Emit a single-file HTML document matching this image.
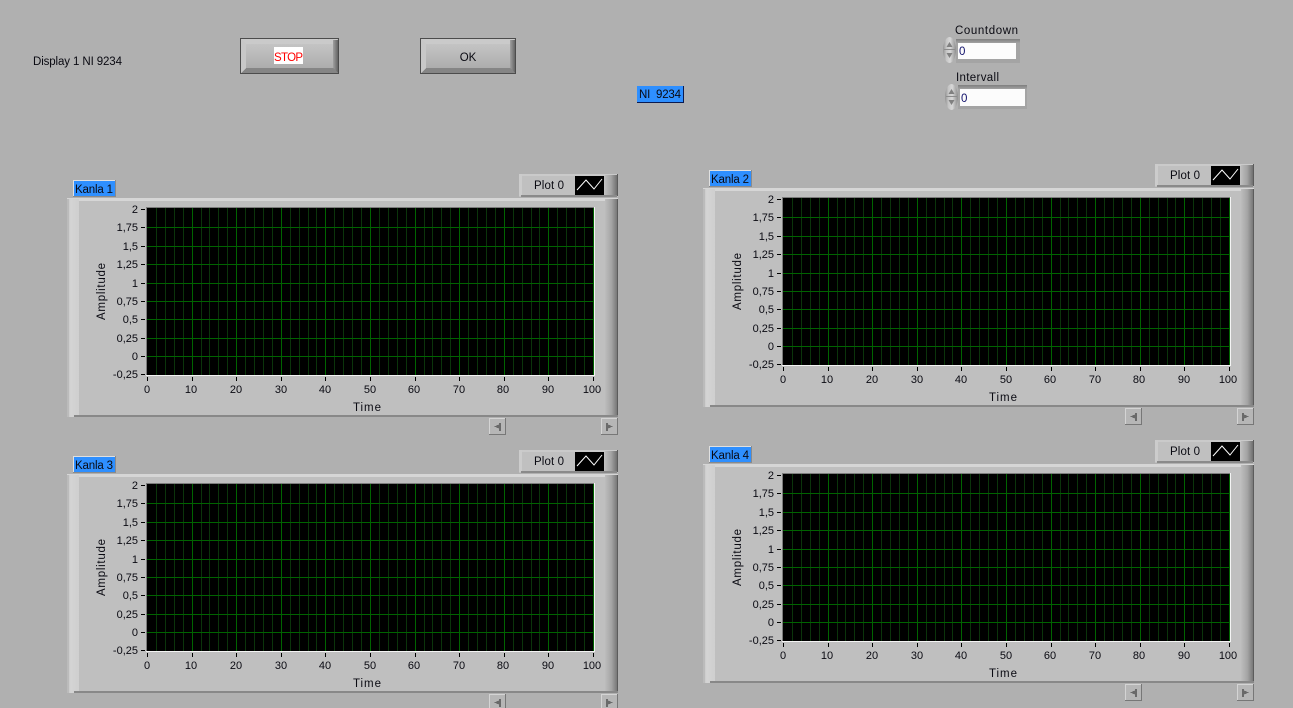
<!DOCTYPE html>
<html><head><meta charset="utf-8"><title>Display 1 NI 9234</title>
<style>
html,body{margin:0;padding:0;background:#b0b0b0;width:1293px;height:708px;overflow:hidden}
svg{display:block;position:absolute;left:0;top:0}
text{font-family:"Liberation Sans",sans-serif;font-size:11px;fill:#0a0a12}
.e{text-anchor:end}.m{text-anchor:middle}
.f12{font-size:11.5px}
</style></head><body>
<svg width="1293" height="708" viewBox="0 0 1293 708" xmlns="http://www.w3.org/2000/svg" shape-rendering="crispEdges">
<defs>
<linearGradient id="rb" x1="0" x2="1" y1="0" y2="0"><stop offset="0" stop-color="#bdbdbd"/><stop offset=".5" stop-color="#a4a4a4"/><stop offset="1" stop-color="#707070"/></linearGradient>
<linearGradient id="lb" x1="0" x2="1" y1="0" y2="0"><stop offset="0" stop-color="#c0c0c0"/><stop offset=".3" stop-color="#d4d4d4"/><stop offset="1" stop-color="#cfcfcf"/></linearGradient>
<linearGradient id="btn" x1="0" x2="0" y1="0" y2="1"><stop offset="0" stop-color="#c4c4c4"/><stop offset="1" stop-color="#adadad"/></linearGradient>
<linearGradient id="btr" x1="0" x2="1" y1="0" y2="0"><stop offset="0" stop-color="#a0a0a0"/><stop offset="1" stop-color="#646464"/></linearGradient>
<linearGradient id="spin" x1="0" x2="1" y1="0" y2="0"><stop offset="0" stop-color="#929292"/><stop offset=".25" stop-color="#c4c4c4"/><stop offset=".55" stop-color="#d8d8d8"/><stop offset="1" stop-color="#8e8e8e"/></linearGradient>
<linearGradient id="fld" x1="0" x2="0" y1="0" y2="1"><stop offset="0" stop-color="#7e7e7e"/><stop offset="1" stop-color="#a2a2a2"/></linearGradient>
<g id="frame">
  <rect x="67" y="198" width="551" height="219" fill="#bfbfbf"/>
  <rect x="67" y="198" width="551" height="3" fill="#d6d6d6"/>
  <rect x="67" y="199" width="12" height="218" fill="url(#lb)"/>
  <rect x="67" y="199" width="2" height="218" fill="#bbb"/>
  <rect x="605" y="199" width="13" height="218" fill="url(#rb)"/>
  <rect x="617" y="199" width="1" height="218" fill="#5c5c5c"/>
  <rect x="74" y="415" width="544" height="2" fill="#888"/>
  <!-- legend -->
  <rect x="519" y="174" width="99" height="23" fill="#c0c0c0"/>
  <rect x="519" y="174" width="99" height="2" fill="#cacaca"/>
  <rect x="519" y="174" width="3" height="22" fill="#cccccc"/>
  <rect x="605" y="175" width="12" height="21" fill="url(#rb)"/>
  <rect x="617" y="174" width="1" height="22" fill="#5c5c5c"/>
  <rect x="521" y="195" width="96" height="2" fill="#8a8a8a"/>
  <rect x="575" y="176" width="29" height="19" fill="#000"/>
  <polyline points="577,190 586,180 594,189 602,179" fill="none" stroke="#fff" stroke-width="1" shape-rendering="auto"/>
  <!-- plot -->
  <rect x="146" y="207" width="449" height="169" fill="#f4f4f4"/>
  <rect x="146" y="207" width="448" height="168" fill="#7c7c7c"/>
  <rect x="147" y="208" width="447" height="167" fill="#000"/>
  <path d="M156.500 208V375M165.500 208V375M174.500 208V375M183.500 208V375M201.500 208V375M209.500 208V375M218.500 208V375M227.500 208V375M245.500 208V375M254.500 208V375M263.500 208V375M272.500 208V375M290.500 208V375M299.500 208V375M308.500 208V375M316.500 208V375M334.500 208V375M343.500 208V375M352.500 208V375M361.500 208V375M379.500 208V375M388.500 208V375M397.500 208V375M406.500 208V375M424.500 208V375M432.500 208V375M441.500 208V375M450.500 208V375M468.500 208V375M477.500 208V375M486.500 208V375M495.500 208V375M513.500 208V375M522.500 208V375M531.500 208V375M539.500 208V375M557.500 208V375M566.500 208V375M575.500 208V375M584.500 208V375" stroke="#0b340b" stroke-width="1" fill="none"/>
  <path d="M192.500 208V375M236.500 208V375M281.500 208V375M325.500 208V375M370.500 208V375M415.500 208V375M459.500 208V375M504.500 208V375M548.500 208V375M593.500 208V375" stroke="#006400" stroke-width="1" fill="none"/>
  <path d="M147 227.500H594M147 246.500H594M147 264.500H594M147 283.500H594M147 301.500H594M147 319.500H594M147 338.500H594M147 356.500H594" stroke="#006400" stroke-width="1" fill="none"/>
  <!-- ticks -->
  <path d="M141 209.500H145M141 227.500H145M141 246.500H145M141 264.500H145M141 283.500H145M141 301.500H145M141 319.500H145M141 338.500H145M141 356.500H145M141 374.500H145" stroke="#000" fill="none"/>
  <path d="M147.500 377V381M192.500 377V381M236.500 377V381M281.500 377V381M325.500 377V381M370.500 377V381M415.500 377V381M459.500 377V381M504.500 377V381M548.500 377V381M593.500 377V381" stroke="#000" fill="none"/>
  <!-- scroll buttons -->
  <rect x="489" y="418" width="17" height="17" fill="#b6b6b6"/>
  <path d="M489.500 435V418.500H506" stroke="#d4d4d4" fill="none"/>
  <path d="M489 434.500H505.500V418" stroke="#777" fill="none"/>
  <path d="M494 426.500L499 424.500V428.500Z" fill="#6a6a6a"/>
  <rect x="499" y="423" width="2" height="8" fill="#6a6a6a"/>
  <rect x="601" y="418" width="17" height="17" fill="#b6b6b6"/>
  <path d="M601.500 435V418.500H618" stroke="#d4d4d4" fill="none"/>
  <path d="M601 434.500H617.500V418" stroke="#777" fill="none"/>
  <rect x="606" y="423" width="2" height="8" fill="#6a6a6a"/>
  <path d="M608 424.500L613 426.500L608 428.500Z" fill="#6a6a6a"/>
</g>
<g id="spinner">
  <ellipse cx="6.500" cy="13" rx="6.500" ry="13" fill="url(#spin)" shape-rendering="auto"/>
  <path d="M1 12.500H12" stroke="#8c8c8c" fill="none"/>
  <path d="M6.500 5L3.500 10H9.500Z" fill="#808080" shape-rendering="auto"/>
  <path d="M6.500 21L3.500 16H9.500Z" fill="#808080" shape-rendering="auto"/>
</g>
</defs>

<!-- top controls -->
<text x="33" y="65" textLength="89" class="f12">Display 1 NI 9234</text>

<rect x="240" y="38" width="99" height="36" fill="#4c4c4c"/>
<rect x="241" y="39" width="97" height="34" fill="#9a9a9a"/>
<path d="M241 39H338L333 44H246Z" fill="#cacaca"/>
<path d="M241 39V73L246 68V44Z" fill="#c8c8c8"/>
<rect x="333" y="40" width="5" height="33" fill="url(#btr)"/>
<path d="M241 73H338L333 68H246Z" fill="#858585"/>
<rect x="246" y="44" width="87" height="24" fill="url(#btn)"/>
<rect x="274" y="47" width="29" height="17" fill="#fff"/>
<text x="288.500" y="61" class="m f12" style="fill:#f00" textLength="29">STOP</text>

<rect x="420" y="38" width="96" height="36" fill="#4c4c4c"/>
<rect x="421" y="39" width="94" height="34" fill="#9a9a9a"/>
<path d="M421 39H515L510 44H426Z" fill="#cacaca"/>
<path d="M421 39V73L426 68V44Z" fill="#c8c8c8"/>
<rect x="510" y="40" width="5" height="33" fill="url(#btr)"/>
<path d="M421 73H515L510 68H426Z" fill="#858585"/>
<rect x="426" y="44" width="84" height="24" fill="url(#btn)"/>
<text x="468" y="61" class="m f12">OK</text>

<rect x="637" y="86" width="47" height="17" fill="#0a1a50"/>
<rect x="637" y="86" width="46" height="16" fill="#2e8fff"/>
<text x="639" y="98" textLength="42" class="f12">NI&#160; 9234</text>

<text x="955" y="34" class="f12" textLength="63">Countdown</text>
<use href="#spinner" x="943" y="37"/>
<rect x="956" y="39" width="64" height="24" fill="#a4a4a4"/>
<rect x="956" y="39" width="64" height="4" fill="url(#fld)"/>
<rect x="958" y="43" width="58" height="16" fill="#fcfcfc"/>
<text x="959" y="55" class="f12" style="fill:#10106a">0</text>

<text x="956" y="81" class="f12" textLength="43">Intervall</text>
<use href="#spinner" x="945" y="84"/>
<rect x="958" y="85" width="69" height="24" fill="#a4a4a4"/>
<rect x="958" y="85" width="69" height="4" fill="url(#fld)"/>
<rect x="960" y="89" width="65" height="17" fill="#fcfcfc"/>
<text x="961" y="102" class="f12" style="fill:#10106a">0</text>

<!-- Chart 1 -->
<g transform="translate(0,0)">
<use href="#frame"/>
<rect x="73" y="180" width="43" height="17" fill="#8a8a8a"/><rect x="73" y="180" width="42" height="16" fill="#e0e0e0"/><rect x="74" y="181" width="41" height="15" fill="#2e8fff"/>
<text x="75" y="193" class="f12" textLength="38">Kanla 1</text>
<text x="534" y="189" class="f12" textLength="30">Plot 0</text>
<text x="138" y="213" class="e">2</text><text x="138" y="231" class="e">1,75</text><text x="138" y="250" class="e">1,5</text><text x="138" y="268" class="e">1,25</text><text x="138" y="287" class="e">1</text><text x="138" y="305" class="e">0,75</text><text x="138" y="323" class="e">0,5</text><text x="138" y="342" class="e">0,25</text><text x="138" y="360" class="e">0</text><text x="138" y="378" class="e">-0,25</text>
<text x="147" y="393" class="m">0</text><text x="191" y="393" class="m">10</text><text x="236" y="393" class="m">20</text><text x="281" y="393" class="m">30</text><text x="325" y="393" class="m">40</text><text x="370" y="393" class="m">50</text><text x="414" y="393" class="m">60</text><text x="459" y="393" class="m">70</text><text x="503" y="393" class="m">80</text><text x="548" y="393" class="m">90</text><text x="592" y="393" class="m">100</text>
<text x="367" y="411" class="m f12" textLength="28">Time</text>
<text transform="translate(105,291.500) rotate(-90)" class="m f12" textLength="57">Amplitude</text>
</g>

<!-- Chart 2 -->
<g transform="translate(636,-10)">
<use href="#frame"/>
<rect x="73" y="180" width="43" height="17" fill="#8a8a8a"/><rect x="73" y="180" width="42" height="16" fill="#e0e0e0"/><rect x="74" y="181" width="41" height="15" fill="#2e8fff"/>
<text x="75" y="193" class="f12" textLength="38">Kanla 2</text>
<text x="534" y="189" class="f12" textLength="30">Plot 0</text>
<text x="138" y="213" class="e">2</text><text x="138" y="231" class="e">1,75</text><text x="138" y="250" class="e">1,5</text><text x="138" y="268" class="e">1,25</text><text x="138" y="287" class="e">1</text><text x="138" y="305" class="e">0,75</text><text x="138" y="323" class="e">0,5</text><text x="138" y="342" class="e">0,25</text><text x="138" y="360" class="e">0</text><text x="138" y="378" class="e">-0,25</text>
<text x="147" y="393" class="m">0</text><text x="191" y="393" class="m">10</text><text x="236" y="393" class="m">20</text><text x="281" y="393" class="m">30</text><text x="325" y="393" class="m">40</text><text x="370" y="393" class="m">50</text><text x="414" y="393" class="m">60</text><text x="459" y="393" class="m">70</text><text x="503" y="393" class="m">80</text><text x="548" y="393" class="m">90</text><text x="592" y="393" class="m">100</text>
<text x="367" y="411" class="m f12" textLength="28">Time</text>
<text transform="translate(105,291.500) rotate(-90)" class="m f12" textLength="57">Amplitude</text>
</g>

<!-- Chart 3 -->
<g transform="translate(0,276)">
<use href="#frame"/>
<rect x="73" y="180" width="43" height="17" fill="#8a8a8a"/><rect x="73" y="180" width="42" height="16" fill="#e0e0e0"/><rect x="74" y="181" width="41" height="15" fill="#2e8fff"/>
<text x="75" y="193" class="f12" textLength="38">Kanla 3</text>
<text x="534" y="189" class="f12" textLength="30">Plot 0</text>
<text x="138" y="213" class="e">2</text><text x="138" y="231" class="e">1,75</text><text x="138" y="250" class="e">1,5</text><text x="138" y="268" class="e">1,25</text><text x="138" y="287" class="e">1</text><text x="138" y="305" class="e">0,75</text><text x="138" y="323" class="e">0,5</text><text x="138" y="342" class="e">0,25</text><text x="138" y="360" class="e">0</text><text x="138" y="378" class="e">-0,25</text>
<text x="147" y="393" class="m">0</text><text x="191" y="393" class="m">10</text><text x="236" y="393" class="m">20</text><text x="281" y="393" class="m">30</text><text x="325" y="393" class="m">40</text><text x="370" y="393" class="m">50</text><text x="414" y="393" class="m">60</text><text x="459" y="393" class="m">70</text><text x="503" y="393" class="m">80</text><text x="548" y="393" class="m">90</text><text x="592" y="393" class="m">100</text>
<text x="367" y="411" class="m f12" textLength="28">Time</text>
<text transform="translate(105,291.500) rotate(-90)" class="m f12" textLength="57">Amplitude</text>
</g>

<!-- Chart 4 -->
<g transform="translate(636,266)">
<use href="#frame"/>
<rect x="73" y="180" width="43" height="17" fill="#8a8a8a"/><rect x="73" y="180" width="42" height="16" fill="#e0e0e0"/><rect x="74" y="181" width="41" height="15" fill="#2e8fff"/>
<text x="75" y="193" class="f12" textLength="38">Kanla 4</text>
<text x="534" y="189" class="f12" textLength="30">Plot 0</text>
<text x="138" y="213" class="e">2</text><text x="138" y="231" class="e">1,75</text><text x="138" y="250" class="e">1,5</text><text x="138" y="268" class="e">1,25</text><text x="138" y="287" class="e">1</text><text x="138" y="305" class="e">0,75</text><text x="138" y="323" class="e">0,5</text><text x="138" y="342" class="e">0,25</text><text x="138" y="360" class="e">0</text><text x="138" y="378" class="e">-0,25</text>
<text x="147" y="393" class="m">0</text><text x="191" y="393" class="m">10</text><text x="236" y="393" class="m">20</text><text x="281" y="393" class="m">30</text><text x="325" y="393" class="m">40</text><text x="370" y="393" class="m">50</text><text x="414" y="393" class="m">60</text><text x="459" y="393" class="m">70</text><text x="503" y="393" class="m">80</text><text x="548" y="393" class="m">90</text><text x="592" y="393" class="m">100</text>
<text x="367" y="411" class="m f12" textLength="28">Time</text>
<text transform="translate(105,291.500) rotate(-90)" class="m f12" textLength="57">Amplitude</text>
</g>
</svg>
</body></html>
